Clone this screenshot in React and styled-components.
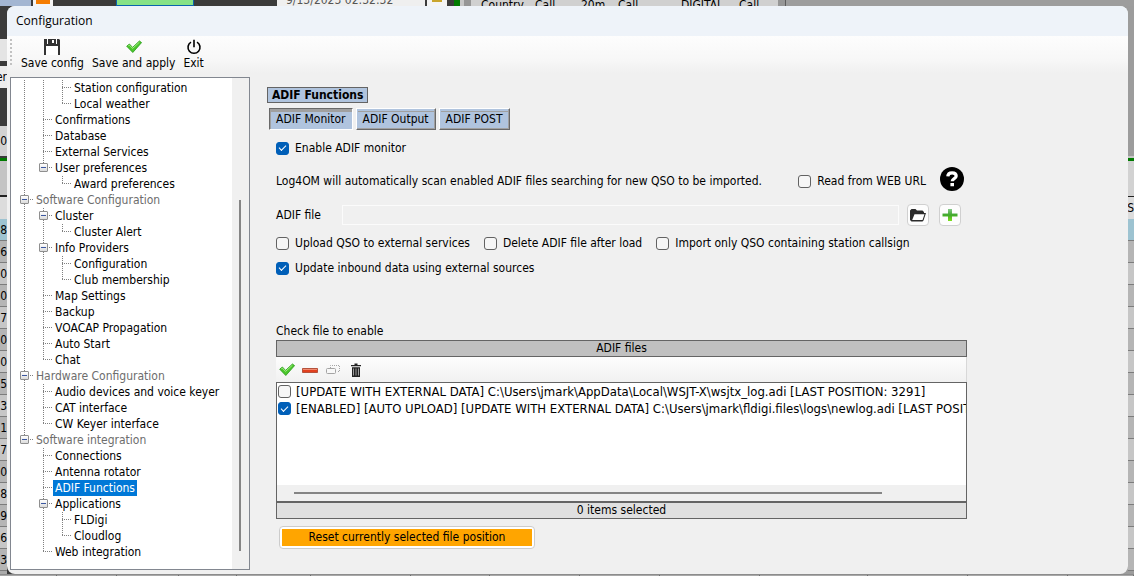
import React from "react";
import styled, { createGlobalStyle, css } from "styled-components";

const GlobalStyle = createGlobalStyle`
  * {
    box-sizing: border-box;
  }

  body {
    margin: 0;
    background: #a8a8a8;
    color: #000;
    font-family: "DejaVu Sans Condensed", "Noto Sans", sans-serif;
    font-size: 12px;
    line-height: 16px;
  }

  button,
  input {
    font: inherit;
    color: inherit;
  }
`;

/* ---------- main window behind the dialog ---------- */

const Desktop = styled.div`
  display: grid;
  grid-template-columns: 7px minmax(0, 1fr) 6px;
  grid-template-rows: 6px minmax(0, 1fr) 2px;
  min-height: 100vh;
  background: linear-gradient(to right, #3b3b3b 0 50%, #9c9c9c 50%);
`;

const TopStrip = styled.div`
  grid-column: 1 / -1;
  display: flex;
  height: 6px;
  overflow: hidden;
  background: #9d9d9d;
`;

const Piece = styled.div`
  flex: none;
  display: flex;
  align-items: ${(p) => p.$align || "flex-start"};
  width: ${(p) => p.$w}px;
  padding-left: ${(p) => p.$pad || 0}px;
  background: ${(p) => p.$bg};
  color: ${(p) => p.$color || "#000"};
  white-space: nowrap;
  line-height: 12px;
`;

const GreenPiece = styled(Piece)`
  border: solid #0a64ad;
  border-width: 0 1px 1px;
`;

const ColumnName = styled.span`
  width: ${(p) => p.$w}px;
  line-height: 10px;
`;

const LeftStrip = styled.div`
  background: #ababab;
  overflow: hidden;
`;

const Block = styled.div`
  display: flex;
  align-items: center;
  justify-content: flex-end;
  height: ${(p) => p.$h}px;
  background: ${(p) => p.$bg};
  white-space: nowrap;
`;

const GridCell = styled(Block)`
  height: 22px;
  border-bottom: 1px solid #7c7c7c;
  background: ${(p) => (p.$active ? "#9dc3d1" : p.$odd ? "#b5b5b5" : "#c6c6c6")};
`;

const RightStrip = styled.div`
  overflow: hidden;
  background: #9c9c9c;
`;

const BottomStrip = styled.div`
  grid-column: 1 / -1;
  display: flex;
  background: #a8a8a8;
  border-top: 1px solid #8c8c8c;
`;

const BottomCell = styled.div`
  flex: ${(p) => p.$w} 1 0;
  border-right: 1px solid #6e6e6e;
`;

/* ---------- dialog ---------- */

const Dialog = styled.section`
  display: flex;
  flex-direction: column;
  min-width: 0;
  border-radius: 8px;
  background: #f0f0f0;
  overflow: hidden;
`;

const TitleBar = styled.h1`
  flex: none;
  margin: 0;
  height: 30px;
  padding-left: 9px;
  background: #eef3f9;
  font-family: "Open Sans", sans-serif;
  font-size: 12px;
  font-weight: 400;
  line-height: 30px;
`;

const Toolbar = styled.div`
  flex: none;
  display: flex;
  align-items: flex-start;
  height: 41px;
  padding: 3px 0 0 3px;
  background: linear-gradient(#fdfdfd, #f7f7f7 60%, #f0f0f0 90%);
`;

const Grip = styled.span`
  width: 2px;
  height: 28px;
  margin-right: 6px;
  background: repeating-linear-gradient(#c2c2c2 0 2px, transparent 2px 4px);
`;

const ToolButton = styled.button`
  display: flex;
  flex-direction: column;
  align-items: center;
  margin-right: 2px;
  padding: 0 3px;
  border: 0;
  background: none;
  white-space: nowrap;

  svg {
    display: block;
  }
`;

const Body = styled.div`
  flex: 1;
  display: grid;
  grid-template-columns: 240px minmax(0, 1fr);
  padding: 0 0 4px 3px;
`;

/* ---------- tree ---------- */

const TreePane = styled.nav`
  display: flex;
  border: 1px solid #828790;
  background: #fff;
`;

const Tree = styled.ul`
  flex: 1;
  min-width: 0;
  margin: 0;
  padding: 2px 0 0 4px;
  list-style: none;
`;

const TreeRow = styled.li`
  display: flex;
  height: 16px;
`;

const dotsDown = "repeating-linear-gradient(to bottom, #808080 0 1px, transparent 1px 2px)";
const dotsRight = "repeating-linear-gradient(to right, #808080 0 1px, transparent 1px 2px)";

const guides = {
  "|": css`
    background: ${dotsDown} 9px 0 / 1px 16px no-repeat;
  `,
  T: css`
    background: ${dotsDown} 9px 0 / 1px 16px no-repeat, ${dotsRight} 9px 7px / 9px 1px no-repeat;
  `,
  L: css`
    background: ${dotsDown} 9px 0 / 1px 8px no-repeat, ${dotsRight} 9px 7px / 9px 1px no-repeat;
  `,
};

const Guide = styled.span`
  flex: none;
  display: flex;
  align-items: flex-start;
  width: 19px;
  padding: 3px 0 0 5px;
  ${(p) => guides[p.$kind]}
`;

const Expander = styled.button`
  width: 9px;
  height: 9px;
  padding: 0;
  border: 1px solid #8f8f8f;
  border-radius: 1px;
  background: linear-gradient(#3b57a0, #3b57a0) center / 5px 1px no-repeat,
    linear-gradient(#fff, #dcdcdc);
`;

const TreeLabel = styled.a`
  padding: 0 2px;
  color: ${(p) => (p.$group ? "#6d6d6d" : "#000")};
  text-decoration: none;
  white-space: nowrap;

  &[aria-current] {
    background: #0078d7;
    color: #fff;
  }
`;

const VScroll = styled.div`
  display: grid;
  grid-template-rows: 122fr 350fr 18fr;
  justify-content: center;
  width: 17px;
  padding-right: 1px;
  background: #f0f0f0;
`;

const VThumb = styled.div`
  grid-row: 2;
  width: 2px;
  background: #858585;
`;

/* ---------- settings page ---------- */

const Main = styled.main`
  display: flex;
  flex-direction: column;
  align-items: flex-start;
  min-width: 0;
  padding: 10px 161px 0 17px;
`;

const SectionTag = styled.h2`
  margin: 0;
  padding: 0 4px;
  border: 1px solid #646464;
  background: #b0c4de;
  font-size: 12px;
  font-weight: 700;
  line-height: 14px;
`;

const Tabs = styled.div`
  display: flex;
  gap: 3px;
  margin: 5px 0 0 2px;
`;

const Tab = styled.button`
  height: 22px;
  padding: 0 6px;
  border: 1px solid;
  border-color: ${(p) => (p.$active ? "#696969 #fff #fff #696969" : "#fff #696969 #696969 #fff")};
  background: #b0c4de;
  box-shadow: ${(p) =>
    p.$active ? "inset 1px 3px 0 #a0a0a0" : "inset -1px -1px 0 #a0a0a0, inset 1px 2px 0 #b0c4de, inset 1px 3px 0 #a0a0a0"};
  line-height: 20px;
  white-space: nowrap;
`;

const Panel = styled.div`
  display: flex;
  flex-direction: column;
  align-items: flex-start;
  align-self: stretch;
  min-width: 0;
  padding: 10px 0 0 9px;
`;

const Row = styled.div`
  display: flex;
  align-items: ${(p) => p.$align || "center"};
  align-self: stretch;
  margin-top: ${(p) => p.$top || 0}px;
  white-space: nowrap;
`;

const CheckLabel = styled.label`
  display: flex;
  align-items: center;
  gap: 6px;
  margin-right: 14px;
  white-space: nowrap;
`;

const CheckInput = styled.input.attrs({ type: "checkbox" })`
  appearance: none;
  flex: none;
  display: grid;
  place-items: center;
  width: 13px;
  height: 13px;
  margin: 0;
  border: 1px solid #626262;
  border-radius: 3px;
  background: #f6f6f6;

  &:checked {
    border-color: #005fb8;
    background: #005fb8;
  }

  &:checked::after {
    content: "";
    width: 6px;
    height: 3px;
    margin-bottom: 2px;
    border: solid #fff;
    border-width: 0 0 1px 1px;
    transform: rotate(-45deg);
  }
`;

const Hint = styled.p`
  margin: 0;
  line-height: 20px;
`;

const WebOption = styled.div`
  display: flex;
  align-items: flex-end;
  margin: 0 3px 0 auto;

  label {
    height: 20px;
  }
`;

const HelpButton = styled.button`
  width: 24px;
  height: 24px;
  padding: 0;
  border: 0;
  background: none;

  svg {
    display: block;
  }
`;

const FileLabel = styled.label`
  width: 66px;
`;

const PathInput = styled.input`
  flex: 1;
  min-width: 0;
  height: 20px;
  margin-right: 8px;
  border: 1px solid #fbfbfb;
  background: #f0f0f0;
`;

const IconButton = styled.button`
  display: grid;
  place-items: center;
  width: 22px;
  height: 22px;
  margin-right: ${(p) => p.$right || 0}px;
  padding: 0;
  border: 1px solid #d0d0d0;
  border-radius: 4px;
  background: #fdfdfd;
`;

const FileBox = styled.div`
  align-self: stretch;
  margin-top: 1px;
`;

const BoxHeader = styled.div`
  height: 17px;
  border: 1px solid #646464;
  background: #c0c0c0;
  line-height: 15px;
  text-align: center;
`;

const BoxTools = styled.div`
  display: flex;
  align-items: center;
  gap: 7px;
  height: 25px;
  padding-left: 3px;
  border-right: 1px solid #d8d8d8;
  background: linear-gradient(#fdfdfd, #f1f1f1);
`;

const BoxTool = styled.button`
  padding: 0;
  border: 0;
  background: none;

  svg {
    display: block;
  }
`;

const FileList = styled.div`
  display: flex;
  flex-direction: column;
  height: 120px;
  border: 1px solid #646464;
  background: #fff;
`;

const FileRows = styled.div`
  flex: 1;
  overflow: hidden;
  padding: 0 0 0 1px;
  font-size: 13px;

  label {
    height: 17px;
    gap: 5px;
    margin: 0;
  }
`;

const HScroll = styled.div`
  display: grid;
  grid-template-columns: 17fr 588fr 84fr;
  align-items: center;
  height: 16px;
  background: #f0f0f0;
`;

const HThumb = styled.div`
  grid-column: 2;
  height: 2px;
  background: #858585;
`;

const BoxFooter = styled(BoxHeader)`
  background: #e0e0e0;
`;

const ResetButton = styled.button`
  width: 256px;
  height: 23px;
  margin: 7px 0 0 3px;
  padding: 2px;
  border: 1px solid #cccccc;
  border-radius: 4px;
  background: #fff;

  span {
    display: block;
    background: #ffa500;
    line-height: 17px;
  }
`;

/* ---------- icons ---------- */

const SaveIcon = () => (
  <svg width="16" height="16" viewBox="0 0 16 16">
    <path d="M0 0h15l1 1v15H0z" fill="#333" />
    <path d="M3 0h1v5H3zM8 1h2v3H8zM12 0h1v5h-1z" fill="#fff" />
    <path d="M2 7h12v9H2z" fill="#fff" />
  </svg>
);

const CheckIcon = () => (
  <svg width="16" height="16" viewBox="0 0 16 16">
    <path d="M.7 7.200 3.400 5l3.200 3.400L13.400 2l2.200 1.600-8.800 9.900z" fill="#4cc62c" stroke="#259a17" strokeWidth=".8" />
    <path d="m2.300 6.800 1-.7 3.200 3.300 6.900-6.200" fill="none" stroke="#a9f08a" strokeWidth=".9" />
  </svg>
);

const PowerIcon = () => (
  <svg width="16" height="16" viewBox="0 0 16 16" fill="none" stroke="#000" strokeWidth="1.6">
    <path d="M5 3.100a6 6 0 1 0 6 0M8 .8v7.400" />
  </svg>
);

const HelpIcon = () => (
  <svg width="24" height="24" viewBox="0 0 24 24">
    <circle cx="12" cy="12" r="12" fill="#000" />
    <path d="M7.800 9.400C7.900 6.800 9.600 5.800 12.100 5.800c2.500 0 4.100 1.200 4.100 3.100 0 2.800-4 2.600-4 5.400" fill="none" stroke="#fff" strokeWidth="3.200" />
    <path d="M10.400 16h3.600v3.200h-3.600z" fill="#fff" />
  </svg>
);

const FolderIcon = () => (
  <svg width="16" height="14" viewBox="0 0 16 14">
    <path d="M0 12V2.500L1.500 1h4l1.500 1.500h5.500L14 4v1h2l-2.500 7.500-1 1H1.500z" fill="#2b2b2b" />
    <path d="M4.500 6.200h10L12.500 12H2.200z" fill="#fff" />
  </svg>
);

const PlusIcon = () => (
  <svg width="16" height="14" viewBox="0 0 16 14">
    <defs>
      <linearGradient id="plus" x1="0" y1="0" x2="0" y2="1">
        <stop offset="0" stopColor="#86c98a" />
        <stop offset=".5" stopColor="#3fa82c" />
        <stop offset="1" stopColor="#7fe01c" />
      </linearGradient>
    </defs>
    <path d="M6 1h4v4.500h5.500v3H10V13H6V8.500H.5v-3H6z" fill="url(#plus)" />
  </svg>
);

const MinusIcon = () => (
  <svg width="16" height="16" viewBox="0 0 16 16">
    <path d="M.5 6.500h15v4H.5z" fill="#e2401f" stroke="#b5523c" strokeWidth="1" />
    <path d="M1 7h14v1H1z" fill="#f18a70" />
  </svg>
);

const CopyIcon = () => (
  <svg width="16" height="16" viewBox="0 0 16 16" fill="none" stroke="#a4a4a4">
    <path d="M5.500 6V3.500h9v6H12" strokeDasharray="1 1" />
    <rect x="1.500" y="6.500" width="9" height="5" rx="1" fill="#f8f8f8" />
  </svg>
);

const TrashIcon = () => (
  <svg width="16" height="16" viewBox="0 0 16 16" fill="#222">
    <path d="M3 3h10v1.300H3zM6.500 1.500h3V3h-3zM4 5.200h8V15H4z" />
    <path d="M5.500 6.500v7M8 6.500v7M10.500 6.500v7" stroke="#aaa" strokeWidth=".9" />
  </svg>
);

/* ---------- data ---------- */

// guides: one character per level
const tree = [
  { guides: "||T", label: "Station configuration" },
  { guides: "||L", label: "Local weather" },
  { guides: "|T", label: "Confirmations" },
  { guides: "|T", label: "Database" },
  { guides: "|T", label: "External Services" },
  { guides: "|L", label: "User preferences", open: true },
  { guides: "| L", label: "Award preferences" },
  { guides: "T", label: "Software Configuration", open: true },
  { guides: "|T", label: "Cluster", open: true },
  { guides: "||L", label: "Cluster Alert" },
  { guides: "|T", label: "Info Providers", open: true },
  { guides: "||T", label: "Configuration" },
  { guides: "||L", label: "Club membership" },
  { guides: "|T", label: "Map Settings" },
  { guides: "|T", label: "Backup" },
  { guides: "|T", label: "VOACAP Propagation" },
  { guides: "|T", label: "Auto Start" },
  { guides: "|L", label: "Chat" },
  { guides: "T", label: "Hardware Configuration", open: true },
  { guides: "|T", label: "Audio devices and voice keyer" },
  { guides: "|T", label: "CAT interface" },
  { guides: "|L", label: "CW Keyer interface" },
  { guides: "L", label: "Software integration", open: true },
  { guides: " T", label: "Connections" },
  { guides: " T", label: "Antenna rotator" },
  { guides: " T", label: "ADIF Functions", current: true },
  { guides: " T", label: "Applications", open: true },
  { guides: " |T", label: "FLDigi" },
  { guides: " |L", label: "Cloudlog" },
  { guides: " L", label: "Web integration" },
];

const logCells = ["18", "16", "00", "00", "17", "00", "20", "15", "13", "21", "17", "00", "18", "19", "16", "23"];

const bottomCells = [57, 59, 62, 58, 74, 100, 79, 90, 80, 100, 109, 100, 100, 66];

const files = [
  {
    text: "[UPDATE WITH EXTERNAL DATA] C:\\Users\\jmark\\AppData\\Local\\WSJT-X\\wsjtx_log.adi [LAST POSITION: 3291]",
    enabled: false,
  },
  {
    text: "[ENABLED] [AUTO UPLOAD] [UPDATE WITH EXTERNAL DATA] C:\\Users\\jmark\\fldigi.files\\logs\\newlog.adi [LAST POSITION: 0]",
    enabled: true,
  },
];

function Check({ label, checked }) {
  return (
    <CheckLabel>
      <CheckInput defaultChecked={checked} />
      {label}
    </CheckLabel>
  );
}

function TreeItem({ item }) {
  const kinds = item.guides.split("");
  return (
    <TreeRow>
      {kinds.map((kind, i) => (
        <Guide key={i} $kind={kind}>
          {item.open && i === kinds.length - 1 && <Expander aria-label={"Collapse " + item.label} />}
        </Guide>
      ))}
      <TreeLabel href="#" $group={kinds.length === 1} aria-current={item.current ? "page" : undefined}>
        {item.label}
      </TreeLabel>
    </TreeRow>
  );
}

function App() {
  return (
    <Desktop>
      <GlobalStyle />
      <TopStrip>
        <Piece $w={31} $bg="#a3b6d2" />
        <Piece $w={2} $bg="#3b3b3b" />
        <Piece $w={20} $bg="linear-gradient(#f57c00, #f57c00) center top / 14px 4px no-repeat #f4f4f4" />
        <Piece $w={63} $bg="#3b3b3b" />
        <GreenPiece $w={78} $bg="#86e286" />
        <Piece $w={83} $bg="#3b3b3b" />
        <Piece $w={148} $pad={9} $bg="#efefef" $align="flex-end" $color="#555">
          9/13/2023 02:32:32
        </Piece>
        <Piece $w={2} $bg="#3b3b3b" />
        <Piece $w={20} $bg="linear-gradient(#c9a52c, #c9a52c) center top / 10px 2px no-repeat #f4f4f4" />
        <Piece $w={7} $bg="#3b3b3b" />
        <Piece $w={6} $bg="#007a00" />
        <Piece $w={4} $bg="#c6c6c6" />
        <Piece $w={7} $bg="#969696" />
        <Piece $w={307} $pad={10} $bg="#d0d0d0">
          <ColumnName $w={54}>Country</ColumnName>
          <ColumnName $w={46}>Call</ColumnName>
          <ColumnName $w={37}>20m</ColumnName>
          <ColumnName $w={63}>Call</ColumnName>
          <ColumnName $w={58}>DIGITAL</ColumnName>
          <ColumnName $w={39}>Call</ColumnName>
        </Piece>
        <Piece $w={7} $bg="#969696" />
        <Piece $w={1} $bg="#5c5c5c" />
      </TopStrip>

      <LeftStrip>
        <Block $h={33} $bg="#3b3b3b" />
        <Block $h={22} $bg="#e4e4e4" />
        <Block $h={5} $bg="#3b3b3b" />
        <Block $h={22} $bg="#ececec">er</Block>
        <Block $h={38} $bg="#3b3b3b" />
        <Block $h={30} $bg="#d2d2d2">0</Block>
        <Block $h={2} $bg="#3b3b3b" />
        <Block $h={3} $bg="#007a00" />
        <Block $h={34} $bg="#c4c4c4" />
        <Block $h={2} $bg="#222" />
        <Block $h={22} $bg="#dcdcdc" />
        {logCells.map((cell, i) => (
          <GridCell key={i} $active={i === 0} $odd={i % 2 === 1}>
            {cell}
          </GridCell>
        ))}
      </LeftStrip>

      <Dialog>
        <TitleBar>Configuration</TitleBar>
        <Toolbar>
          <Grip />
          <ToolButton>
            <SaveIcon />
            Save config
          </ToolButton>
          <ToolButton>
            <CheckIcon />
            Save and apply
          </ToolButton>
          <ToolButton>
            <PowerIcon />
            Exit
          </ToolButton>
        </Toolbar>

        <Body>
          <TreePane aria-label="Settings">
            <Tree>
              {tree.map((item, i) => (
                <TreeItem key={i} item={item} />
              ))}
            </Tree>
            <VScroll>
              <VThumb />
            </VScroll>
          </TreePane>

          <Main>
            <SectionTag>ADIF Functions</SectionTag>
            <Tabs>
              <Tab $active>ADIF Monitor</Tab>
              <Tab>ADIF Output</Tab>
              <Tab>ADIF POST</Tab>
            </Tabs>
            <Panel>
              <Check label="Enable ADIF monitor" checked />
              <Row $top={11} $align="flex-end">
                <Hint>Log4OM will automatically scan enabled ADIF files searching for new QSO to be imported.</Hint>
                <WebOption>
                  <Check label="Read from WEB URL" />
                  <HelpButton aria-label="Help">
                    <HelpIcon />
                  </HelpButton>
                </WebOption>
              </Row>
              <Row $top={13}>
                <FileLabel htmlFor="adif-file">ADIF file</FileLabel>
                <PathInput id="adif-file" />
                <IconButton $right={10} aria-label="Browse">
                  <FolderIcon />
                </IconButton>
                <IconButton $right={6} aria-label="Add">
                  <PlusIcon />
                </IconButton>
              </Row>
              <Row $top={9}>
                <Check label="Upload QSO to external services" />
                <Check label="Delete ADIF file after load" />
                <Check label="Import only QSO containing station callsign" />
              </Row>
              <Row $top={9}>
                <Check label="Update inbound data using external sources" checked />
              </Row>
              <Row $top={47}>Check file to enable</Row>
              <FileBox>
                <BoxHeader>ADIF files</BoxHeader>
                <BoxTools>
                  <BoxTool aria-label="Enable">
                    <CheckIcon />
                  </BoxTool>
                  <BoxTool aria-label="Remove">
                    <MinusIcon />
                  </BoxTool>
                  <BoxTool aria-label="Duplicate">
                    <CopyIcon />
                  </BoxTool>
                  <BoxTool aria-label="Delete">
                    <TrashIcon />
                  </BoxTool>
                </BoxTools>
                <FileList>
                  <FileRows>
                    {files.map((file, i) => (
                      <Check key={i} label={file.text} checked={file.enabled} />
                    ))}
                  </FileRows>
                  <HScroll>
                    <HThumb />
                  </HScroll>
                </FileList>
                <BoxFooter>0 items selected</BoxFooter>
              </FileBox>
              <ResetButton>
                <span>Reset currently selected file position</span>
              </ResetButton>
            </Panel>
          </Main>
        </Body>
      </Dialog>

      <RightStrip>
        <Block $h={150} $bg="#9c9c9c" />
        <Block $h={2} $bg="#c6c6c6" />
        <Block $h={3} $bg="#007a00" />
        <Block $h={35} $bg="#d2d2d2" />
        <Block $h={1} $bg="#222" />
        <Block $h={22} $bg="#dcdcdc">S</Block>
        {logCells.map((cell, i) => (
          <GridCell key={i} $active={i === 0} $odd={i % 2 === 1} />
        ))}
      </RightStrip>

      <BottomStrip>
        {bottomCells.map((w, i) => (
          <BottomCell key={i} $w={w} />
        ))}
      </BottomStrip>
    </Desktop>
  );
}

export default App;
